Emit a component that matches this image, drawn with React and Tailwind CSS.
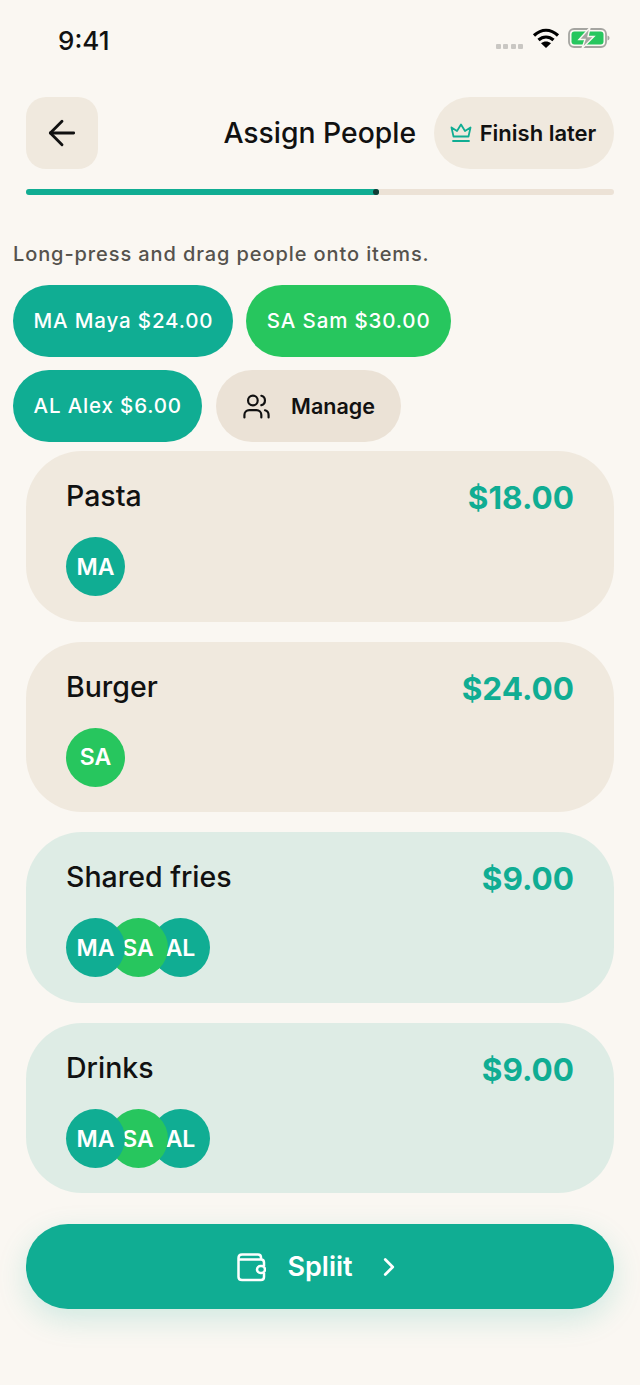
import { ArrowLeft, ChevronRight, Users } from 'lucide-react';

const TEAL = 'bg-[#10ad93]';
const GREEN = 'bg-[#27c65e]';

const chips = [
  { label: 'MA Maya $24.00', bg: TEAL },
  { label: 'SA Sam $30.00', bg: GREEN },
  { label: 'AL Alex $6.00', bg: TEAL },
];

const items = [
  { name: 'Pasta', price: '$18.00', bg: 'bg-[#f0e9de]', people: [['MA', TEAL]] },
  { name: 'Burger', price: '$24.00', bg: 'bg-[#f0e9de]', people: [['SA', GREEN]] },
  { name: 'Shared fries', price: '$9.00', bg: 'bg-[#deece5]', people: [['MA', TEAL], ['SA', GREEN], ['AL', TEAL]] },
  { name: 'Drinks', price: '$9.00', bg: 'bg-[#deece5]', people: [['MA', TEAL], ['SA', GREEN], ['AL', TEAL]] },
];

function StatusBar() {
  return (
    <div className="h-[97px] flex items-start justify-between pt-[25px] pl-[58px] pr-[30px]">
      <span className="text-[26px] leading-[32px] font-medium text-[#111]">9:41</span>
      <div className="flex items-center pt-[2px]">
        <div className="flex gap-[2.5px] mr-[9px] mt-[16px]">
          <span className="w-[5px] h-[5px] rounded-[1px] bg-[#c9c7c3]" />
          <span className="w-[5px] h-[5px] rounded-[1px] bg-[#c9c7c3]" />
          <span className="w-[5px] h-[5px] rounded-[1px] bg-[#c9c7c3]" />
          <span className="w-[5px] h-[5px] rounded-[1px] bg-[#c9c7c3]" />
        </div>
        <svg width="28" height="22" viewBox="0 0 28 22" className="mr-[8px]">
          <path d="M2 8.5C9.5 1.5 18.5 1.5 26 8.5" fill="none" stroke="#000" strokeWidth="3.2" />
          <path d="M6.5 13C11 9 17 9 21.5 13" fill="none" stroke="#000" strokeWidth="3.2" />
          <path d="M14 21L9 16.2C12 13.8 16 13.8 19 16.2Z" fill="#000" />
        </svg>
        <svg width="42" height="22" viewBox="0 0 42 22">
          <rect x="1" y="2" width="37" height="18" rx="5" fill="none" stroke="#a5a5a1" strokeWidth="1.8" />
          <rect x="3.5" y="4.5" width="32" height="13" rx="3" fill="#27c65e" />
          <path d="M39.5 8.5C41 9 41.5 10 41.5 11C41.5 12 41 13 39.5 13.5Z" fill="#a5a5a1" />
          <path d="M22 0.5L11 12.5H17L14 21.5L26 9.5H20Z" fill="#a5a5a1" stroke="#faf7f2" strokeWidth="1.4" />
        </svg>
      </div>
    </div>
  );
}

function Header() {
  return (
    <div className="px-[26px]">
      <div className="flex items-center h-[72px]">
        <button className="w-[72px] h-[72px] rounded-[20px] bg-[#f0e9de] flex items-center justify-center text-[#111]">
          <ArrowLeft size={40} strokeWidth={1.7} />
        </button>
        <h1 className="flex-1 text-right pr-[18px] text-[28.3px] font-medium text-[#111]">Assign People</h1>
        <button className="h-[72px] w-[180px] rounded-full bg-[#f0e9de] flex items-center justify-center gap-[8px] pr-[2px]">
          <svg width="22" height="20" viewBox="0 0 22 20" fill="none" stroke="#10ad93" strokeWidth="1.8" strokeLinejoin="round" strokeLinecap="round">
            <path d="M3.5 13.5L1.5 4.5L7 8L11 1.5L15 8L20.5 4.5L18.5 13.5Z" />
            <path d="M3 18H19" />
          </svg>
          <span className="text-[22px] font-semibold text-[#111]">Finish later</span>
        </button>
      </div>
      <div className="mt-[20px] h-[6px] rounded-full bg-[#ece2d6]">
        <div className="h-full w-[60%] rounded-full bg-[#10ad93] flex justify-end">
          <span className="w-[6px] h-[6px] rounded-full bg-[#123c36]" />
        </div>
      </div>
    </div>
  );
}

function Chips() {
  return (
    <div className="px-[13px] mt-[47px]">
      <p className="text-[20px] leading-[24px] font-medium text-[#55524d] tracking-[0.9px]">Long-press and drag people onto items.</p>
      <div className="flex flex-wrap gap-x-[13px] gap-y-[13px] mt-[19px]">
        {chips.map((c) => (
          <div key={c.label} className={`h-[72px] pl-[20.5px] pr-[20px] pt-[1px] rounded-full flex items-center text-white text-[20.5px] font-medium tracking-[0.85px] ${c.bg}`}>
            {c.label}
          </div>
        ))}
        <button className="ml-[1px] h-[72px] w-[185px] rounded-full bg-[#ebe2d6] flex items-center justify-center gap-[20px]">
          <Users size={29} strokeWidth={1.8} className="text-[#111]" />
          <span className="text-[21.5px] font-semibold text-[#111]">Manage</span>
        </button>
      </div>
    </div>
  );
}

function ItemCard({ item }) {
  return (
    <div className={`h-[170.6px] rounded-[56px] px-[40px] pt-[26px] ${item.bg}`}>
      <div className="flex justify-between items-start">
        <span className="text-[28.5px] leading-[38px] font-medium text-[#111]">{item.name}</span>
        <span className="text-[31.5px] leading-[42px] font-bold text-[#10ad93]">{item.price}</span>
      </div>
      <div className="flex mt-[18px]">
        {item.people.map(([initials, bg], i) => (
          <div
            key={initials}
            className={`relative w-[59px] h-[59px] pt-[1px] rounded-full flex items-center justify-center text-white text-[23px] font-semibold ${bg} ${i > 0 ? '-ml-[16.5px]' : ''} ${i === 0 ? 'z-30' : i === 1 ? 'z-20' : 'z-10'}`}
          >
            {initials}
          </div>
        ))}
      </div>
    </div>
  );
}

export default function App() {
  return (
    <div className="w-[640px] h-[1385px] overflow-hidden bg-[#faf7f2] font-['Inter',sans-serif]">
      <StatusBar />
      <Header />
      <Chips />
      <div className="px-[26px] mt-[9px] flex flex-col gap-[20px]">
        {items.map((item) => (
          <ItemCard key={item.name} item={item} />
        ))}
      </div>
      <div className="px-[26px] mt-[30.6px]">
        <button className="w-full h-[85px] pt-[1px] rounded-[42px] bg-[#10ad93] flex items-center justify-center gap-[21px] text-white shadow-[0_10px_30px_rgba(16,173,147,0.18)]">
          <svg width="30" height="30" viewBox="0 0 30 30" fill="none" stroke="currentColor" strokeWidth="2.5" strokeLinejoin="round">
            <path d="M25 8V5.5C25 3.5 24 2.5 22 2.5H6C3.5 2.5 2.5 3.5 2.5 6V25C2.5 27 3.5 28 6 28H25C27 28 28 27 28 25V21" />
            <path d="M2.5 7.5H25C27 7.5 28 8.5 28 10.5V14" />
            <rect x="21" y="14" width="8" height="7" rx="3.5" />
          </svg>
          <span className="text-[27px] font-semibold">Spliit</span>
          <ChevronRight size={30} strokeWidth={2.2} />
        </button>
      </div>
    </div>
  );
}
